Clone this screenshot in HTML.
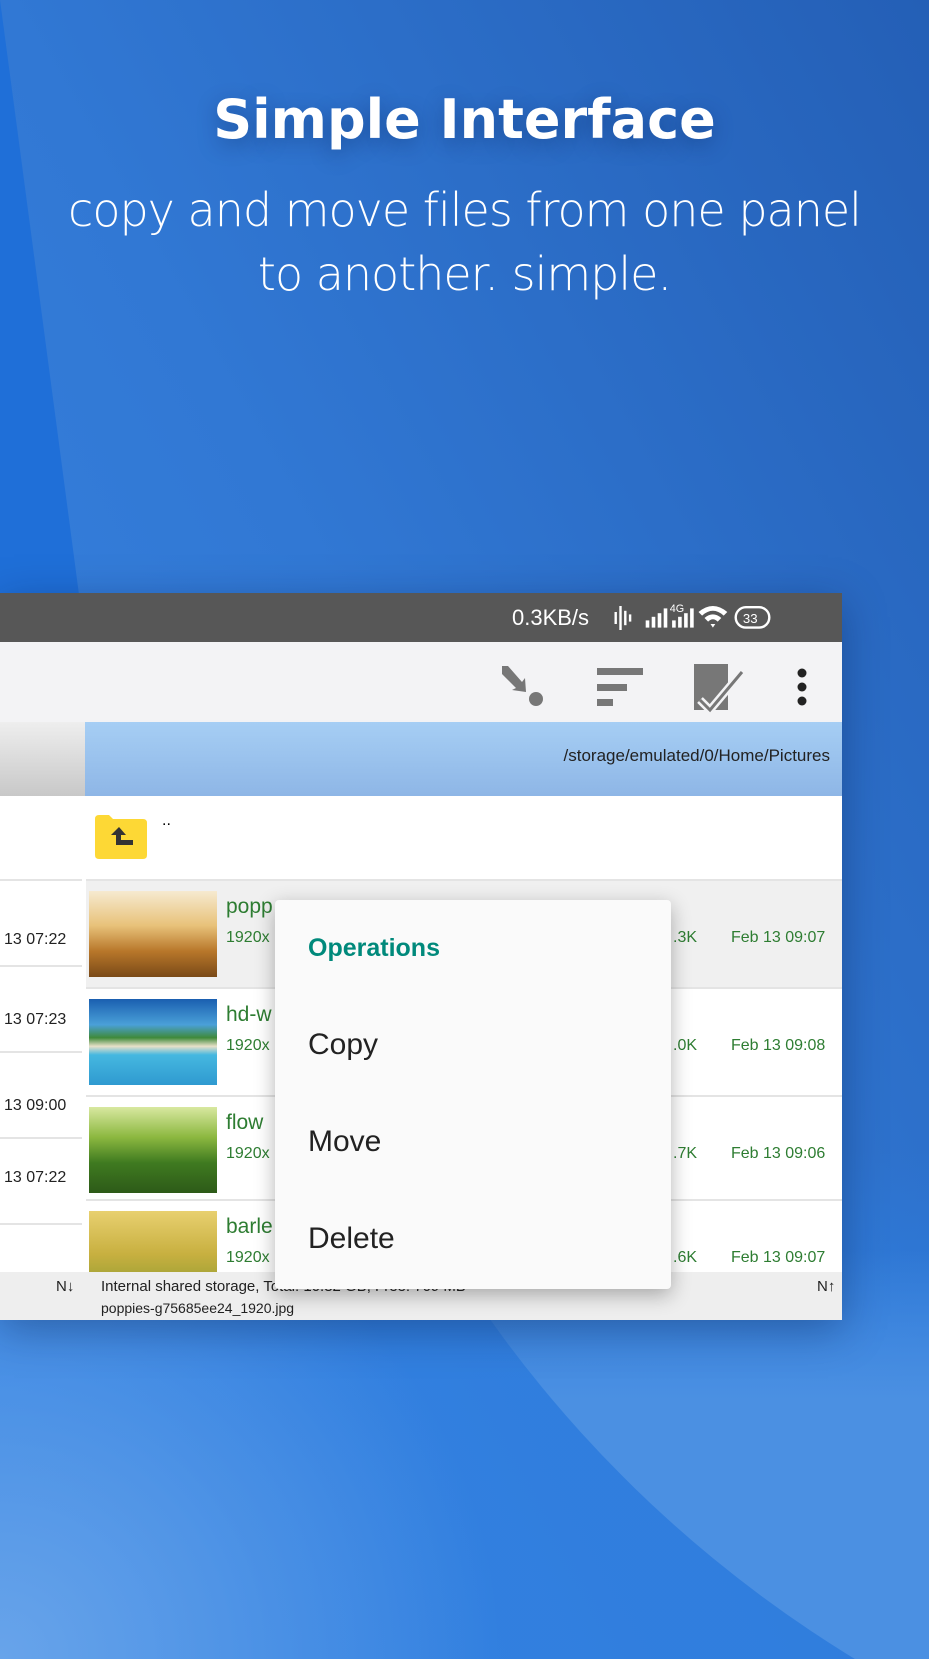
<!DOCTYPE html>
<html style="overflow:hidden;width:929px;height:1659px"><head><meta charset="utf-8"><style>
*{margin:0;padding:0;box-sizing:border-box}
body{width:929px;height:1659px;overflow:hidden;position:relative;font-family:"Liberation Sans","DejaVu Sans",sans-serif;background:#2f74d2}
.h1{position:absolute;left:0;width:929px;text-align:center;color:#fff;font-family:"DejaVu Sans","Liberation Sans",sans-serif;}
.t{top:88px;font-size:54px;font-weight:bold;text-shadow:0 6px 20px rgba(0,30,80,.35)}
.s{top:178px;font-size:46px;font-weight:200;line-height:64px;letter-spacing:-1px}
.panel{position:absolute;left:0;top:593px;width:842px;height:727px;background:#fff;box-shadow:0 10px 40px rgba(0,20,60,.35);overflow:hidden}
.sb{position:absolute;left:0;top:0;width:842px;height:49px;background:#575757;color:#fff}
.tb{position:absolute;top:49px;left:0;width:842px;height:80px;background:#f3f3f5}
.path{position:absolute;top:129px;left:85px;width:757px;height:74px;background:linear-gradient(#a6cef4,#8eb6e6);font-size:17px;color:#222;text-align:right;padding:24px 12px 0 0}
.pathL{position:absolute;top:129px;left:0;width:85px;height:74px;background:linear-gradient(#eee,#c8c8c8)}
.row{position:absolute;left:86px;width:756px;border-bottom:2px solid #e4e4e4}
.lrow{position:absolute;left:0;width:82px;border-bottom:2px solid #e4e4e4;font-size:16px;color:#222;padding-left:4px}
.thumb{position:absolute;left:3px;width:128px;height:86px}
.nm{position:absolute;left:140px;font-size:21px;color:#2e7d32}
.dm{position:absolute;left:140px;font-size:16px;color:#2e7d32}
.sz{position:absolute;left:587px;font-size:16px;color:#2e7d32}
.dt{position:absolute;left:645px;font-size:16px;color:#2e7d32}
.bot{position:absolute;top:679px;left:0;width:842px;height:48px;background:#eee;font-size:15px;color:#222}
.menu{position:absolute;left:275px;top:900px;width:396px;height:389px;background:#fafafa;border-radius:4px;box-shadow:0 6px 20px rgba(0,0,0,.3)}
.mi{position:absolute;left:33px;font-size:30px;color:#222}
</style></head><body>
<svg style="position:absolute;left:0;top:0" width="929" height="1659" viewBox="0 0 929 1659">
 <defs>
  <linearGradient id="g1" x1="0" y1="1" x2="1" y2="0">
   <stop offset="0" stop-color="#3a86e4"/><stop offset=".5" stop-color="#3178d4"/><stop offset="1" stop-color="#245fb6"/>
  </linearGradient>
  <linearGradient id="g2" gradientUnits="userSpaceOnUse" x1="0" y1="1250" x2="0" y2="1400">
   <stop offset="0" stop-color="#4b90e2" stop-opacity="0"/><stop offset="1" stop-color="#4b90e2"/>
  </linearGradient>
  <linearGradient id="g4" gradientUnits="userSpaceOnUse" x1="0" y1="1150" x2="0" y2="1350">
   <stop offset="0" stop-color="#2f80e2" stop-opacity="0"/><stop offset="1" stop-color="#2f80e2" stop-opacity=".6"/>
  </linearGradient>
  <radialGradient id="g3" cx="0" cy="1659" r="500" gradientUnits="userSpaceOnUse">
   <stop offset="0" stop-color="#68a4ea"/><stop offset="1" stop-color="#68a4ea" stop-opacity="0"/>
  </radialGradient>
 </defs>
 <rect width="929" height="1659" fill="url(#g1)"/>
 <path d="M0 0 Q40 300 85 640 L0 640Z" fill="#1f6fd8"/>
 <rect x="0" y="1150" width="929" height="509" fill="url(#g4)"/>
 <circle cx="1500" cy="600" r="1240" fill="url(#g2)"/>
 <rect x="0" y="1159" width="600" height="500" fill="url(#g3)"/>
</svg>
<div class="h1 t">Simple Interface</div>
<div class="h1 s">copy and move files from one panel<br>to another. simple.</div>

<div class="panel">
 <div class="sb">
  <div style="position:absolute;left:512px;top:12px;font-size:22px">0.3KB/s</div>
  <svg style="position:absolute;left:612px;top:7px" width="185" height="36" viewBox="0 0 154 30" fill="#fff">
   <rect x="2" y="10" width="2" height="10"/><rect x="6" y="5" width="2" height="20"/><rect x="10" y="9" width="2" height="12"/><rect x="14" y="12" width="2" height="6"/>
   <rect x="28" y="17" width="3" height="6"/><rect x="33" y="14" width="3" height="9"/><rect x="38" y="11" width="3" height="12"/><rect x="43" y="7" width="3" height="16"/>
   <text x="48" y="10" font-size="9" font-family="Liberation Sans">4G</text>
   <rect x="50" y="17" width="3" height="6"/><rect x="55" y="14" width="3" height="9"/><rect x="60" y="11" width="3" height="12"/><rect x="65" y="7" width="3" height="16"/>
   <path d="M72 10 Q84 0 96 10 L93 13 Q84 5 75 13Z M77 15 Q84 9 91 15 L88 18 Q84 14 80 18Z M82 20 L86 20 L84 23Z"/>
   <rect x="103" y="6" width="28" height="17" rx="8.5" fill="none" stroke="#fff" stroke-width="2"/>
   <text x="109" y="19" font-size="11" font-family="Liberation Sans">33</text>
  </svg>
 </div>
 <div class="tb">
  <svg style="position:absolute;left:500px;top:22px" width="44" height="44" viewBox="0 0 44 44"><path d="M2 2 L8 2 L22 18 L25 14 L26 28 L12 26 L16 24 L2 10Z" fill="#777"/><circle cx="36" cy="35" r="7" fill="#777"/></svg>
  <svg style="position:absolute;left:597px;top:26px" width="46" height="40"><rect x="0" y="0" width="46" height="7" fill="#777"/><rect x="0" y="16" width="30" height="7" fill="#777"/><rect x="0" y="31" width="16" height="7" fill="#777"/></svg>
  <svg style="position:absolute;left:694px;top:22px" width="52" height="50"><rect x="0" y="0" width="34" height="46" fill="#777"/><path d="M6 36 L16 46 L48 8" stroke="#f3f3f5" stroke-width="8" fill="none"/><path d="M6 36 L16 46 L48 8" stroke="#777" stroke-width="3" fill="none"/></svg>
  <svg style="position:absolute;left:796px;top:26px" width="12" height="40" fill="#222"><circle cx="6" cy="5" r="4.5"/><circle cx="6" cy="19" r="4.5"/><circle cx="6" cy="33" r="4.5"/></svg>
 </div>
 <div class="pathL"></div>
 <div class="path">/storage/emulated/0/Home/Pictures</div>
 <div class="lrow" style="top:203px;height:85px"></div>
 <div class="row" style="top:203px;height:85px">
  <svg style="position:absolute;left:9px;top:19px" width="52" height="44"><path d="M0 4 Q0 0 4 0 L14 0 L18 4 L48 4 Q52 4 52 8 L52 40 Q52 44 48 44 L4 44 Q0 44 0 40Z" fill="#fdd835"/><path d="M24 12 L16 20 L21 20 L21 30 L38 30 L38 25 L26 25 L26 20 L31 20Z" fill="#333"/></svg>
  <div style="position:absolute;left:76px;top:16px;font-size:16px">..</div>
 </div>
 <div class="lrow" style="top:288px;height:86px;padding-top:50px">13 07:22</div>
 <div class="lrow" style="top:374px;height:86px;padding-top:44px">13 07:23</div>
 <div class="lrow" style="top:460px;height:86px;padding-top:44px">13 09:00</div>
 <div class="lrow" style="top:546px;height:86px;padding-top:30px">13 07:22</div>
 <div class="row" style="top:288px;height:108px;background:#f0f0f0">
  <div class="thumb" style="top:10px;background:linear-gradient(180deg,#f6ead0 0%,#e8c27a 40%,#b8772a 70%,#7a4a18 100%)"></div>
  <div class="nm" style="top:14px">popp</div><div class="dm" style="top:48px">1920x</div>
  <div class="sz" style="top:48px">.3K</div><div class="dt" style="top:48px">Feb 13 09:07</div>
 </div>
 <div class="row" style="top:396px;height:108px">
  <div class="thumb" style="top:10px;background:linear-gradient(180deg,#1a5fb0 0%,#4aa0d8 30%,#3f8a3a 45%,#e8e0c8 55%,#45b8e0 65%,#2f9ad0 100%)"></div>
  <div class="nm" style="top:14px">hd-w</div><div class="dm" style="top:48px">1920x</div>
  <div class="sz" style="top:48px">.0K</div><div class="dt" style="top:48px">Feb 13 09:08</div>
 </div>
 <div class="row" style="top:504px;height:104px">
  <div class="thumb" style="top:10px;background:linear-gradient(180deg,#d8e8a0 0%,#8cb840 35%,#3f7a20 65%,#2d5a18 100%)"></div>
  <div class="nm" style="top:14px">flow</div><div class="dm" style="top:48px">1920x</div>
  <div class="sz" style="top:48px">.7K</div><div class="dt" style="top:48px">Feb 13 09:06</div>
 </div>
 <div class="row" style="top:608px;height:71px;border:none;overflow:hidden">
  <div class="thumb" style="top:10px;background:linear-gradient(180deg,#e8d070 0%,#c8b040 50%,#8a9a30 100%)"></div>
  <div class="nm" style="top:14px">barle</div><div class="dm" style="top:48px">1920x</div>
  <div class="sz" style="top:48px">.6K</div><div class="dt" style="top:48px">Feb 13 09:07</div>
 </div>
 <div class="bot">
  <div style="position:absolute;left:56px;top:6px">N↓</div>
  <div style="position:absolute;left:101px;top:6px">Internal shared storage, Total: 10.82 GB, Free: 709 MB</div>
  <div style="position:absolute;left:101px;top:28px;font-size:14px">poppies-g75685ee24_1920.jpg</div>
  <div style="position:absolute;left:817px;top:6px">N↑</div>
 </div>
</div>

<div class="menu">
 <div class="mi" style="top:34px;font-size:25px;font-weight:bold;color:#00897b">Operations</div>
 <div class="mi" style="top:128px">Copy</div>
 <div class="mi" style="top:225px">Move</div>
 <div class="mi" style="top:322px">Delete</div>
</div>
</body></html>
